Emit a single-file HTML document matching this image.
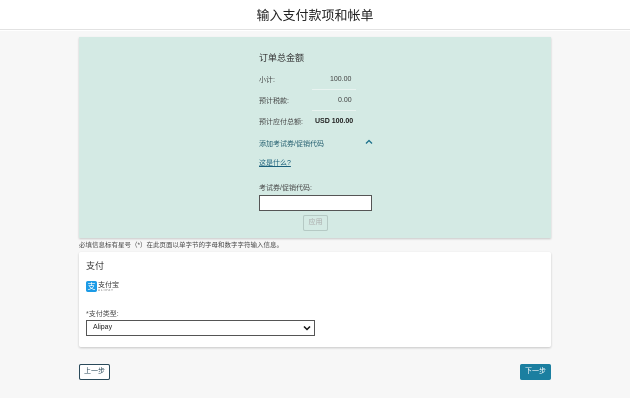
<!DOCTYPE html>
<html><head><meta charset="utf-8"><style>
*{box-sizing:border-box;margin:0;padding:0}
body{width:630px;height:405px;background:#fff;font-family:"Liberation Sans","Noto Sans CJK SC",sans-serif;color:#333;position:relative;overflow:hidden}
.abs{position:absolute}
.hdr{left:0;top:0;width:630px;height:30px;border-bottom:1px solid #e2e2e2;text-align:center;font-size:13px;line-height:32px;color:#222}
.bg{left:0;top:31px;width:630px;height:367px;background:#f7f7f7}
.green{left:79px;top:37px;width:472px;height:201px;background:#d4eae4;box-shadow:0 1px 2px rgba(0,0,0,.2)}
.t{font-size:7px;color:#444;white-space:nowrap}
.sep{height:1px;background:#e8f3f0;width:44px;left:312px}
.card{left:79px;top:252px;width:472px;height:95px;background:#fff;box-shadow:0 1px 2px rgba(0,0,0,.2);border-radius:2px}
.btn{width:31px;height:16px;font-size:7px;text-align:center;line-height:14px;border-radius:2px}
</style></head><body>
<div class="abs hdr">输入支付款项和帐单</div>
<div class="abs bg"></div>
<div class="abs green"></div>
<div class="abs t" style="left:259px;top:51px;font-size:9px;color:#333">订单总金额</div>
<div class="abs t" style="left:259px;top:75px">小计:</div>
<div class="abs t" style="left:330px;top:76px">100.00</div>
<div class="abs sep" style="top:89px"></div>
<div class="abs t" style="left:259px;top:96px">预计税款:</div>
<div class="abs t" style="left:338px;top:97px">0.00</div>
<div class="abs sep" style="top:110px"></div>
<div class="abs t" style="left:259px;top:117px">预计应付总额:</div>
<div class="abs t" style="left:315px;top:118px;font-weight:bold;color:#222">USD 100.00</div>
<div class="abs t" style="left:259px;top:139px;color:#225d6e">添加考试券/促销代码</div>
<svg class="abs" style="left:365px;top:139px" width="8" height="6"><path d="M1 4.5L4 1.5L7 4.5" stroke="#1a6f8a" stroke-width="1.3" fill="none"/></svg>
<div class="abs t" style="left:259px;top:158px;color:#1a5f7a;text-decoration:underline">这是什么?</div>
<div class="abs t" style="left:259px;top:183px">考试券/促销代码:</div>
<div class="abs" style="left:259px;top:195px;width:113px;height:16px;background:#fff;border:1px solid #555"></div>
<div class="abs btn" style="left:303px;top:215px;width:25px;border:1px solid #b5c9c4;color:#aaa;background:#d4eae4">应用</div>
<div class="abs t" style="left:79px;top:239px;font-size:6.5px">必填信息标有星号（*）在此页面以单字节的字母和数字字符输入信息。</div>
<div class="abs card"></div>
<div class="abs t" style="left:86px;top:259px;font-size:9px;color:#333">支付</div>
<div class="abs" style="left:86px;top:281px;width:11px;height:11px;background:#1c9be6;border-radius:2px;color:#fff;font-size:8px;line-height:11px;text-align:center">支</div>
<div class="abs t" style="left:98px;top:280px;font-size:7px;color:#333">支付宝</div>
<div class="abs t" style="left:98px;top:288px;font-size:3px;color:#666;letter-spacing:1px">ALIPAY</div>
<div class="abs t" style="left:86px;top:309px">*支付类型:</div>
<div class="abs" style="left:86px;top:320px;width:229px;height:16px;background:#fff;border:1px solid #555;font-size:7px;line-height:14px;padding-left:6px;color:#222">Alipay</div>
<svg class="abs" style="left:303px;top:325px" width="8" height="6"><path d="M1 1.5L4 4.5L7 1.5" stroke="#111" stroke-width="1.5" fill="none"/></svg>
<div class="abs btn" style="left:79px;top:364px;border:1px solid #2a4a5a;background:#fff;color:#2a4a5a">上一步</div>
<div class="abs btn" style="left:520px;top:364px;background:#1b7fa0;color:#fff;line-height:16px">下一步</div>
</body></html>
